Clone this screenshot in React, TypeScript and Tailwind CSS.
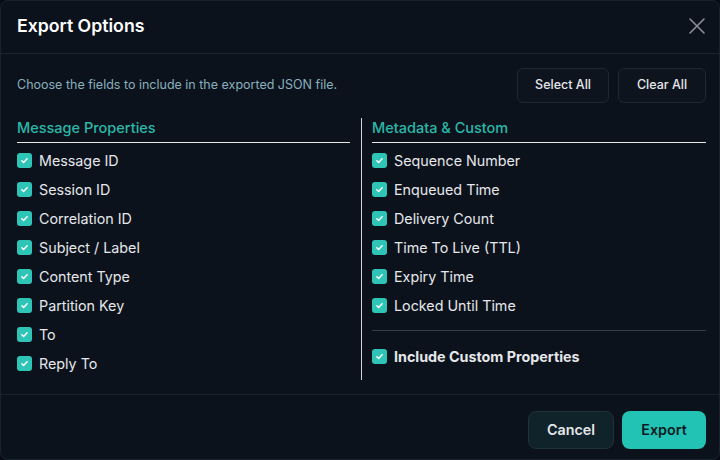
import React, { useState } from 'react';

const messageFields = [
  'Message ID',
  'Session ID',
  'Correlation ID',
  'Subject / Label',
  'Content Type',
  'Partition Key',
  'To',
  'Reply To',
];

const metadataFields = [
  'Sequence Number',
  'Enqueued Time',
  'Delivery Count',
  'Time To Live (TTL)',
  'Expiry Time',
  'Locked Until Time',
];

const Check: React.FC<{ checked: boolean; onToggle: () => void; label: string; bold?: boolean }> = ({
  checked,
  onToggle,
  label,
  bold,
}) => (
  <label className="flex items-center gap-[7px] h-[29px] cursor-pointer" onClick={onToggle}>
    <span
      className={`w-[15px] h-[15px] rounded-[3px] flex items-center justify-center shrink-0 ${
        checked ? 'bg-[#2ec4b6]' : 'border border-[#4b5563]'
      }`}
    >
      {checked && (
        <svg width="9" height="9" viewBox="0 0 12 12" fill="none">
          <path d="M2.5 6.3l2.3 2.3 4.7-5" stroke="white" strokeWidth="2" strokeLinecap="round" strokeLinejoin="round" />
        </svg>
      )}
    </span>
    <span className={`text-[14.3px] text-[#e5e7eb] ${bold ? 'font-bold' : ''}`}>{label}</span>
  </label>
);

export default function App() {
  const all = [...messageFields, ...metadataFields, 'custom'];
  const [selected, setSelected] = useState<string[]>(all);

  const toggle = (f: string) =>
    setSelected((s) => (s.includes(f) ? s.filter((x) => x !== f) : [...s, f]));

  return (
    <div className="w-[720px] h-[460px] bg-[#070b12]" style={{ fontFamily: 'Inter, "Noto Sans", sans-serif' }}>
      <div className="w-full h-full bg-[#0c121c] border border-[#1a2230] rounded-lg flex flex-col overflow-hidden">
        {/* Header */}
        <div className="h-[53px] shrink-0 flex items-center justify-between pl-4 pr-[13px] pb-[2px] border-b border-[#1c2431]">
          <h2 className="text-[17.7px] font-semibold text-white">Export Options</h2>
          <button className="text-[#8a8f98]">
            <svg width="18" height="18" viewBox="0 0 18 18" fill="none">
              <path d="M2 2l14 14M16 2L2 16" stroke="currentColor" strokeWidth="1.6" strokeLinecap="round" />
            </svg>
          </button>
        </div>

        {/* Body */}
        <div className="flex-1 pl-4 pr-[13px] pt-[14px]">
          <div className="flex items-center justify-between">
            <p className="text-[12.5px] text-[#88b0bc]">Choose the fields to include in the exported JSON file.</p>
            <div className="flex gap-[9px]">
              <button
                onClick={() => setSelected(all)}
                className="h-[35px] w-[92px] rounded-md border border-[#1f2733] bg-[#0e141e] text-[12.5px] font-medium text-[#e5e7eb]"
              >
                Select All
              </button>
              <button
                onClick={() => setSelected([])}
                className="h-[35px] w-[88px] rounded-md border border-[#1f2733] bg-[#0e141e] text-[12.5px] font-medium text-[#e5e7eb]"
              >
                Clear All
              </button>
            </div>
          </div>

          <div className="flex mt-[15px]">
            <div className="w-[333px]">
              <h3 className="text-[14.5px] font-medium text-[#2bb8a8] pb-[4px] border-b border-[#e5e7eb] leading-[20px] mb-[3px]">
                Message Properties
              </h3>
              {messageFields.map((f) => (
                <Check key={f} label={f} checked={selected.includes(f)} onToggle={() => toggle(f)} />
              ))}
            </div>
            <div className="w-px bg-[#d1d5db] ml-[11px] h-[262px]" />
            <div className="flex-1 pl-[10px]">
              <h3 className="text-[14.5px] font-medium text-[#2bb8a8] pb-[4px] border-b border-[#e5e7eb] leading-[20px] mb-[3px]">
                Metadata &amp; Custom
              </h3>
              {metadataFields.map((f) => (
                <Check key={f} label={f} checked={selected.includes(f)} onToggle={() => toggle(f)} />
              ))}
              <div className="border-t border-[#343c48] mt-[10px] pt-[11px]">
                <Check
                  label="Include Custom Properties"
                  bold
                  checked={selected.includes('custom')}
                  onToggle={() => toggle('custom')}
                />
              </div>
            </div>
          </div>
        </div>

        {/* Footer */}
        <div className="h-[65px] shrink-0 border-t border-[#1a222e] flex items-start justify-end gap-[8px] px-[13px] pt-[16px]">
          <button className="h-[38px] w-[86px] rounded-lg border border-[#1f3238] bg-[#10232a] text-[14.3px] font-semibold text-[#e5e7eb]">
            Cancel
          </button>
          <button className="h-[38px] w-[84px] rounded-lg bg-[#22c3b5] text-[14.3px] font-semibold text-[#0c1a1f]">
            Export
          </button>
        </div>
      </div>
    </div>
  );
}
